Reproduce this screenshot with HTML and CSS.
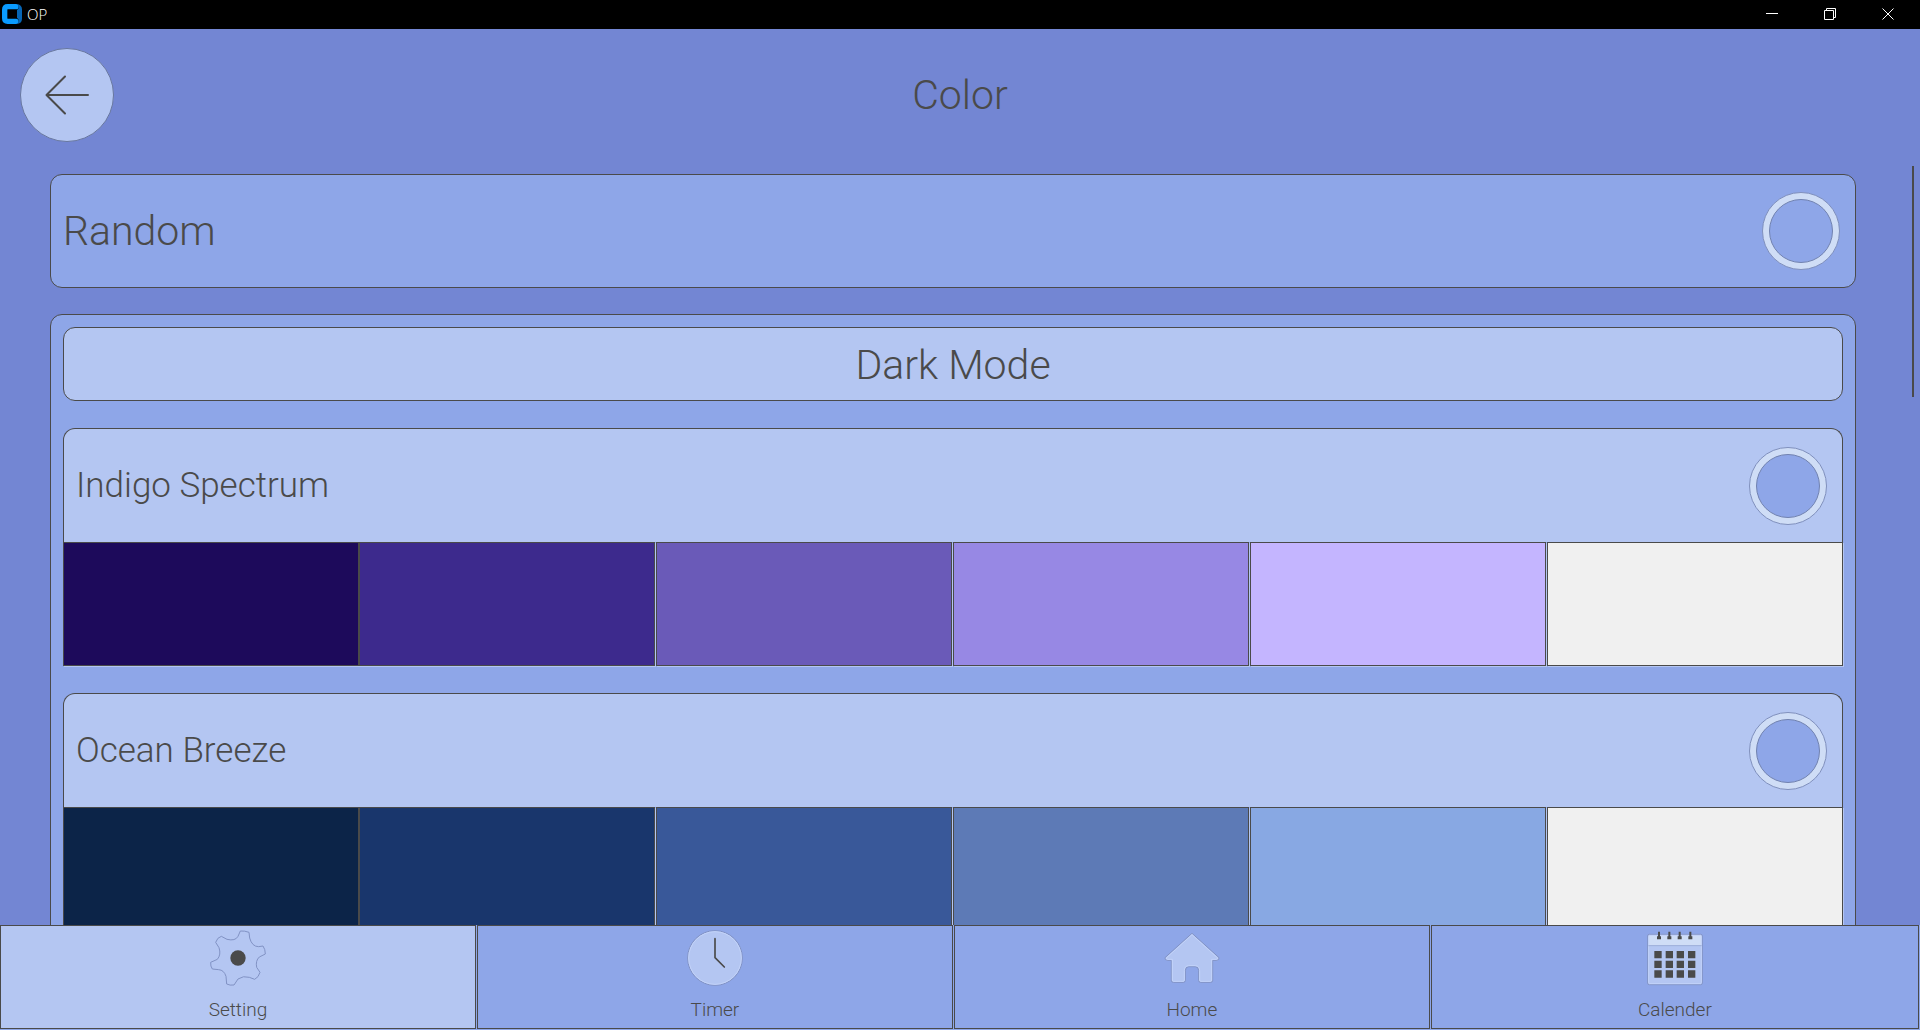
FILE: index.html
```html
<!DOCTYPE html>
<html lang="en">
<head>
    <meta charset="UTF-8">
    <title>OP</title>
    <link rel="stylesheet" href="styles.css">
</head>
<body>

    <!-- Window title bar -->
    <div class="titlebar">
        <svg class="app-logo" viewBox="0 0 60 60">
            <path d="M42 8H17Q8 8 8 17V43Q8 52 17 52H42" fill="none" stroke="#0a9bff" stroke-width="16" stroke-linecap="round"/>
            <path d="M44 0Q60 2 60 16V44Q60 58 44 60Q50 56 50 50Q50 44 45 42V18Q50 16 50 10Q50 4 44 0Z" fill="#0665b5"/>
        </svg>
        <span class="app-name">OP</span>
        <button class="window-button" aria-label="Minimize">
            <svg viewBox="0 0 12 12"><path d="M0 5.5H12"/></svg>
        </button>
        <button class="window-button" aria-label="Restore">
            <svg viewBox="0 0 12 12"><path d="M.5 2.5H9.500V11.500H.5ZM2.500 2.500V.5H11.500V9.500H9.500"/></svg>
        </button>
        <button class="window-button" aria-label="Close">
            <svg viewBox="0 0 12 12"><path d="M.5 .5L11.500 11.500M11.500 .5L.5 11.500"/></svg>
        </button>
    </div>

    <!-- Page header -->
    <header class="header">
        <button class="back-button" aria-label="Back">
            <svg viewBox="0 0 44 40"><path d="M20 1.500L1.500 20L20 38.500M1.500 20H43"/></svg>
        </button>
        <h1>Color</h1>
    </header>

    <!-- Theme list -->
    <main class="content">
        <div class="theme-list">
            <div class="card random">
                <label for="random">Random</label>
                <input type="radio" name="theme" id="random">
            </div>

            <section class="card group">
                <h2>Dark Mode</h2>

                <div class="palette">
                    <div class="palette-head">
                        <label for="indigo">Indigo Spectrum</label>
                        <input type="radio" name="theme" id="indigo">
                    </div>
                    <div class="swatches indigo">
                        <div></div><div></div><div></div><div></div><div></div><div></div>
                    </div>
                </div>

                <div class="palette">
                    <div class="palette-head">
                        <label for="ocean">Ocean Breeze</label>
                        <input type="radio" name="theme" id="ocean">
                    </div>
                    <div class="swatches ocean">
                        <div></div><div></div><div></div><div></div><div></div><div></div>
                    </div>
                </div>
            </section>
        </div>
        <div class="scroll-track"><div class="scroll-thumb"></div></div>
    </main>

    <!-- Bottom navigation -->
    <nav class="nav">
        <button class="active">
            <svg viewBox="0 0 168 168">
                <path class="shape" d="M91 3Q104 2 117 7L119 24Q126 50 146 50L159 48Q166 58 166 72L148 81Q136 92 140 112L150 127Q146 142 134 148L118 142Q100 136 84 147L72 165Q60 167 50 162L48 139Q42 120 26 119L7 117Q1 109 2 97L22 88Q34 74 27 53L17 37Q22 22 34 19L51 28Q76 34 84 19Z"/>
                <circle class="dark" cx="84" cy="84" r="23"/>
            </svg>
            Setting
        </button>
        <button>
            <svg viewBox="0 0 168 168">
                <circle class="shape" cx="84" cy="84" r="82"/>
                <circle class="highlight" cx="84" cy="84" r="79"/>
                <path class="line" d="M84 26V83L112 111"/>
            </svg>
            Timer
        </button>
        <button>
            <svg viewBox="0 0 168 168">
                <path class="shape" d="M84 10L165 83Q166 90 158 91H146V151Q146 157 140 157H110Q104 157 104 151V122Q104 110 94 110H74Q64 110 64 122V151Q64 157 58 157H28Q22 157 22 151V91H10Q2 90 3 83Z"/>
                <path class="highlight" d="M84 14L161 84Q162 88 157 88H143V150Q143 154 139 154H111Q107 154 107 150V121Q106 107 94 107H74Q62 107 61 121V150Q61 154 57 154H29Q25 154 25 150V88H11Q6 88 7 84Z"/>
            </svg>
            Home
        </button>
        <button>
            <svg viewBox="0 0 168 168">
                <rect class="shape" x="2" y="13" width="164" height="151" rx="5"/>
                <path class="calendar-top" d="M5 45V18Q5 16 8 16H160Q163 16 163 18V45Z"/>
                <rect class="highlight" x="5" y="16" width="158" height="145" rx="3"/>
                <path class="calendar-fold" d="M4 47H164"/>
                <path class="pins" d="M36 5V26M67 5V26M98 5V26M130 5V26"/>
                <path class="dark" d="M30 19h12v9h-12zM61 19h12v9h-12zM92 19h12v9h-12zM124 19h12v9h-12z"/>
                <path class="dark" d="M22 63h22v22h-22zM56 63h22v22h-22zM89 63h22v22h-22zM123 63h22v22h-22zM22 92h22v22h-22zM56 92h22v22h-22zM89 92h22v22h-22zM123 92h22v22h-22zM22 121h22v22h-22zM56 121h22v22h-22zM89 121h22v22h-22zM123 121h22v22h-22z"/>
            </svg>
            Calender
        </button>
    </nav>

</body>
</html>
```

FILE: styles.css
```css
* {
    box-sizing: border-box;
}
body {
    display: flex;
    flex-direction: column;
    height: 100vh;
    margin: 0;
    background-color: #7386d3;
    color: #4a4a4a;
    font-family: Roboto, sans-serif;
    font-weight: 300;
    overflow: hidden;
}
button {
    padding: 0;
    border: none;
    color: inherit;
    font: inherit;
    cursor: pointer;
}
h1, h2 {
    margin: 0;
    font-size: 41px;
    font-weight: 300;
}

/* Title bar */
.titlebar {
    display: flex;
    align-items: center;
    flex-shrink: 0;
    height: 29px;
    padding: 0 3px 1px 2px;
    background-color: #000;
    color: #fff;
}
.app-logo {
    width: 20px;
    height: 20px;
    margin-right: 5px;
}
.app-name {
    flex-grow: 1;
    font-family: "Open Sans", sans-serif;
    font-size: 15px;
    font-weight: 300;
}
.window-button {
    display: flex;
    justify-content: center;
    align-items: center;
    width: 58px;
    height: 28px;
    background-color: #000;
}
.window-button svg {
    width: 12px;
    height: 12px;
    fill: none;
    stroke: #fff;
}

/* Header */
.header {
    display: grid;
    grid-template-columns: 94px 1fr 94px;
    align-items: center;
    flex-shrink: 0;
    padding: 19px 20px 24px;
}
.header h1 {
    text-align: center;
}
.back-button {
    display: flex;
    justify-content: center;
    align-items: center;
    height: 94px;
    border: 1px solid #68779f;
    border-radius: 50%;
    background-color: #b4c6f2;
}
.back-button svg {
    width: 44px;
    height: 40px;
    fill: none;
    stroke: #4a4a4a;
    stroke-width: 2;
    stroke-linecap: round;
    stroke-linejoin: round;
}

/* Theme list */
.content {
    display: flex;
    flex: 1;
    min-height: 0;
}
.theme-list {
    flex: 1;
    padding: 8px 56px 0 50px;
    overflow-y: auto;
    scrollbar-width: none;
}
.scroll-track {
    width: 8px;
}
.scroll-thumb {
    width: 2px;
    height: 231px;
    background-color: #4a4a4a;
}
.card {
    border: 1px solid #4a4a4a;
    border-radius: 12px;
    background-color: #8ea6e8;
}
.random {
    display: flex;
    justify-content: space-between;
    align-items: center;
    height: 114px;
    margin-bottom: 26px;
    padding: 0 15px 0 12px;
    font-size: 41px;
}
.group {
    padding: 12px;
}
.group h2 {
    height: 74px;
    margin-bottom: 27px;
    border: 1px solid #4a4a4a;
    border-radius: 12px;
    background-color: #b4c6f2;
    line-height: 74px;
    text-align: center;
}
.palette {
    margin-bottom: 27px;
}
.palette-head {
    display: flex;
    justify-content: space-between;
    align-items: center;
    height: 114px;
    padding: 0 15px 0 12px;
    border: 1px solid #4a4a4a;
    border-bottom: none;
    border-radius: 12px 12px 0 0;
    background-color: #b4c6f2;
    font-size: 35px;
}
input[type="radio"] {
    appearance: none;
    display: flex;
    width: 78px;
    height: 78px;
    margin: 0;
    padding: 6px;
    border: 1px solid #8090bd;
    border-radius: 50%;
    background-color: #cfddf6;
    cursor: pointer;
}
input[type="radio"]::before {
    content: '';
    flex: 1;
    border: 1px solid #7182b0;
    border-radius: 50%;
    background-color: #8ea6e8;
}
input[type="radio"]:checked::before {
    background-color: #4a4a4a;
}
.swatches {
    display: flex;
}
.swatches div {
    flex: 1;
    height: 124px;
    margin-left: 1px;
    border: 1px solid #4a4a4a;
    box-shadow: 1px 1px 0 #b4c6f2;
}
.swatches div:nth-child(1), .swatches div:nth-child(2) {
    margin-left: 0;
}
.indigo div:nth-child(1) { background-color: #1d0a5b; }
.indigo div:nth-child(2) { background-color: #3d2a8d; }
.indigo div:nth-child(3) { background-color: #6a5ab8; }
.indigo div:nth-child(4) { background-color: #9788e4; }
.indigo div:nth-child(5) { background-color: #c4b5ff; }
.indigo div:nth-child(6) { background-color: #f0f0f0; }
.ocean div:nth-child(1) { background-color: #0c2448; }
.ocean div:nth-child(2) { background-color: #19366c; }
.ocean div:nth-child(3) { background-color: #395899; }
.ocean div:nth-child(4) { background-color: #5d7ab6; }
.ocean div:nth-child(5) { background-color: #88a8e3; }
.ocean div:nth-child(6) { background-color: #f0f0f0; }

/* Bottom navigation */
.nav {
    display: grid;
    grid-template-columns: 39fr 39fr 39fr 40fr;
    gap: 1px;
    flex-shrink: 0;
    height: 105px;
    padding: 0 1px 1px 0;
    background-color: #8ea6e8;
}
.nav button {
    display: flex;
    flex-direction: column;
    align-items: center;
    gap: 12px;
    padding-top: 4px;
    border: 1px solid #4a4a4a;
    background-color: #8ea6e8;
    font-size: 19px;
    line-height: 24px;
}
.nav .active {
    background-color: #b4c6f2;
}
.nav svg {
    width: 56px;
    height: 56px;
}
.shape {
    fill: #b4c6f2;
    stroke: #8192c4;
    stroke-width: 3;
    stroke-linejoin: round;
}
.highlight {
    fill: none;
    stroke: #c3d3f9;
    stroke-width: 3;
}
.line {
    fill: none;
    stroke: #4a4a4a;
    stroke-width: 5;
    stroke-linecap: round;
}
.dark {
    fill: #4a4a4a;
}
.calendar-top {
    fill: #cfddf6;
}
.calendar-fold {
    stroke: #9fb0da;
    stroke-width: 3;
}
.pins {
    stroke: #4a4a4a;
    stroke-width: 6;
}
```
